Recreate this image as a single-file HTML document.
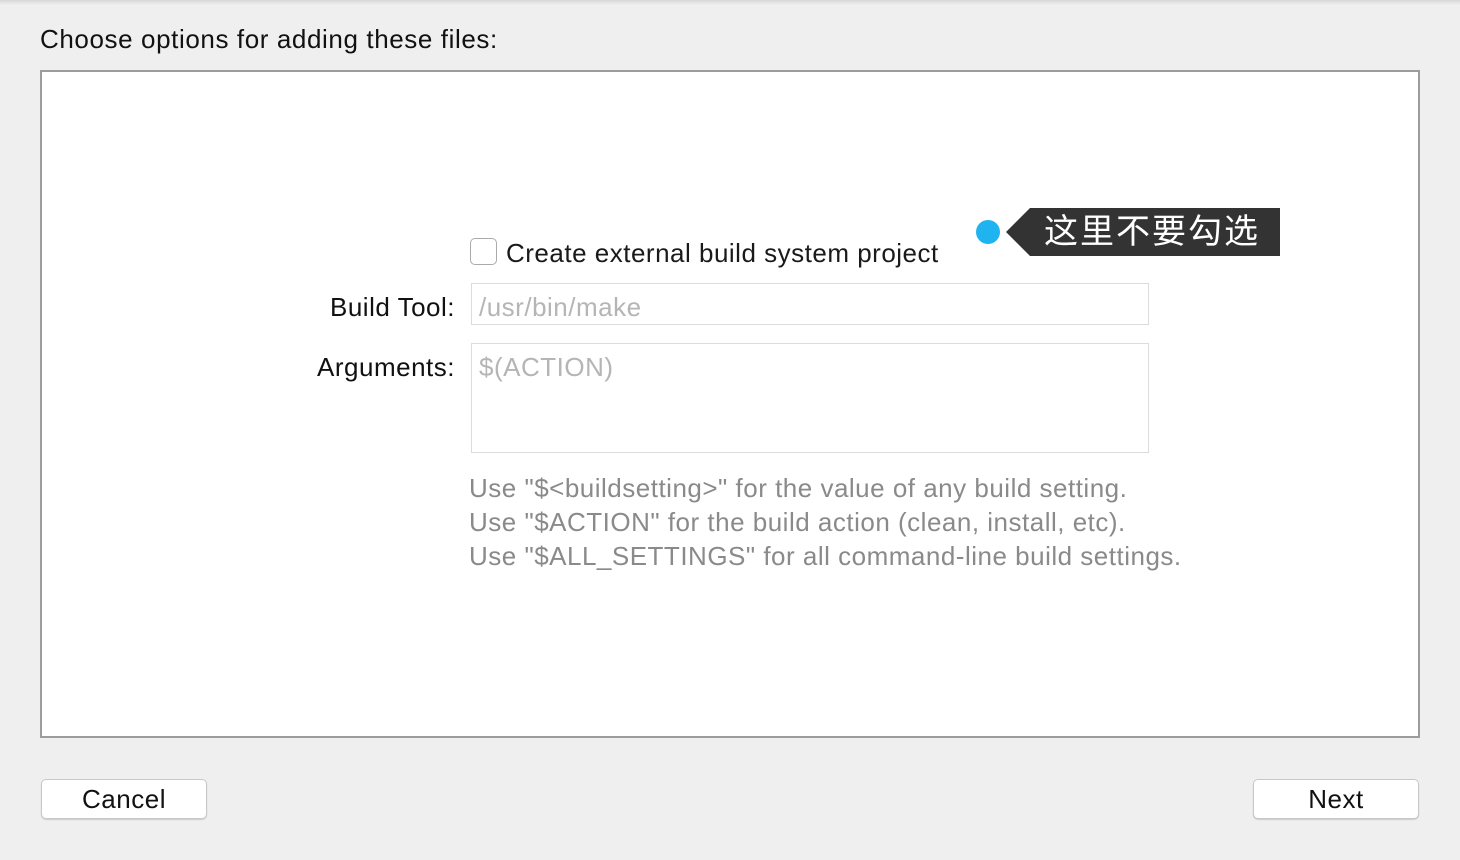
<!DOCTYPE html>
<html><head><style>
body{margin:0;width:1460px;height:860px;background:#efefef;font-family:"Liberation Sans","Noto Sans CJK SC",sans-serif;position:relative;overflow:hidden}
.a{position:absolute;white-space:nowrap;font-size:26px;letter-spacing:0.5px}
</style></head><body>
<div class="a" style="left:0;top:0;width:1460px;height:5px;background:linear-gradient(#d8d8d8,#efefef)"></div>
<div class="a" style="left:40px;top:24px;color:#111;letter-spacing:0.6px">Choose options for adding these files:</div>
<div class="a" style="left:40px;top:70px;width:1376px;height:664px;background:#fff;border:2px solid #9c9c9c"></div>
<div class="a" style="left:470px;top:238px;width:27px;height:27px;border:1px solid #aaa;border-radius:5px;background:#fff;box-sizing:border-box"></div>
<div class="a" style="left:506px;top:238px;color:#1a1a1a">Create external build system project</div>
<div class="a" style="left:976px;top:220px;width:24px;height:24px;border-radius:50%;background:#1fb3f0"></div>
<svg class="a" style="left:1006px;top:208px" width="274" height="48"><polygon points="0,24 24,0 274,0 274,48 24,48" fill="#333"/></svg>
<div class="a" style="left:1044px;top:209px;font-size:34px;letter-spacing:2px;color:#fff;line-height:46px">这里不要勾选</div>
<div class="a" style="right:1005px;top:292px;color:#111">Build Tool:</div>
<div class="a" style="left:471px;top:283px;width:678px;height:42px;border:1px solid #dcdcdc;box-sizing:border-box"></div>
<div class="a" style="left:479px;top:292px;color:#b5b5b5">/usr/bin/make</div>
<div class="a" style="right:1005px;top:352px;color:#111">Arguments:</div>
<div class="a" style="left:471px;top:343px;width:678px;height:110px;border:1px solid #dcdcdc;box-sizing:border-box"></div>
<div class="a" style="left:479px;top:352px;color:#b5b5b5">$(ACTION)</div>
<div class="a" style="left:469px;top:471px;color:#8a8a8a;line-height:34px">Use "$&lt;buildsetting&gt;" for the value of any build setting.<br>Use "$ACTION" for the build action (clean, install, etc).<br>Use "$ALL_SETTINGS" for all command-line build settings.</div>
<div class="a" style="left:41px;top:779px;width:166px;height:40px;background:#fff;border:1px solid #c8c8c8;border-radius:5px;box-sizing:border-box;box-shadow:0 1px 1px rgba(0,0,0,.15);text-align:center;line-height:38px;color:#111">Cancel</div>
<div class="a" style="left:1253px;top:779px;width:166px;height:40px;background:#fff;border:1px solid #c8c8c8;border-radius:5px;box-sizing:border-box;box-shadow:0 1px 1px rgba(0,0,0,.15);text-align:center;line-height:38px;color:#111">Next</div>
</body></html>
